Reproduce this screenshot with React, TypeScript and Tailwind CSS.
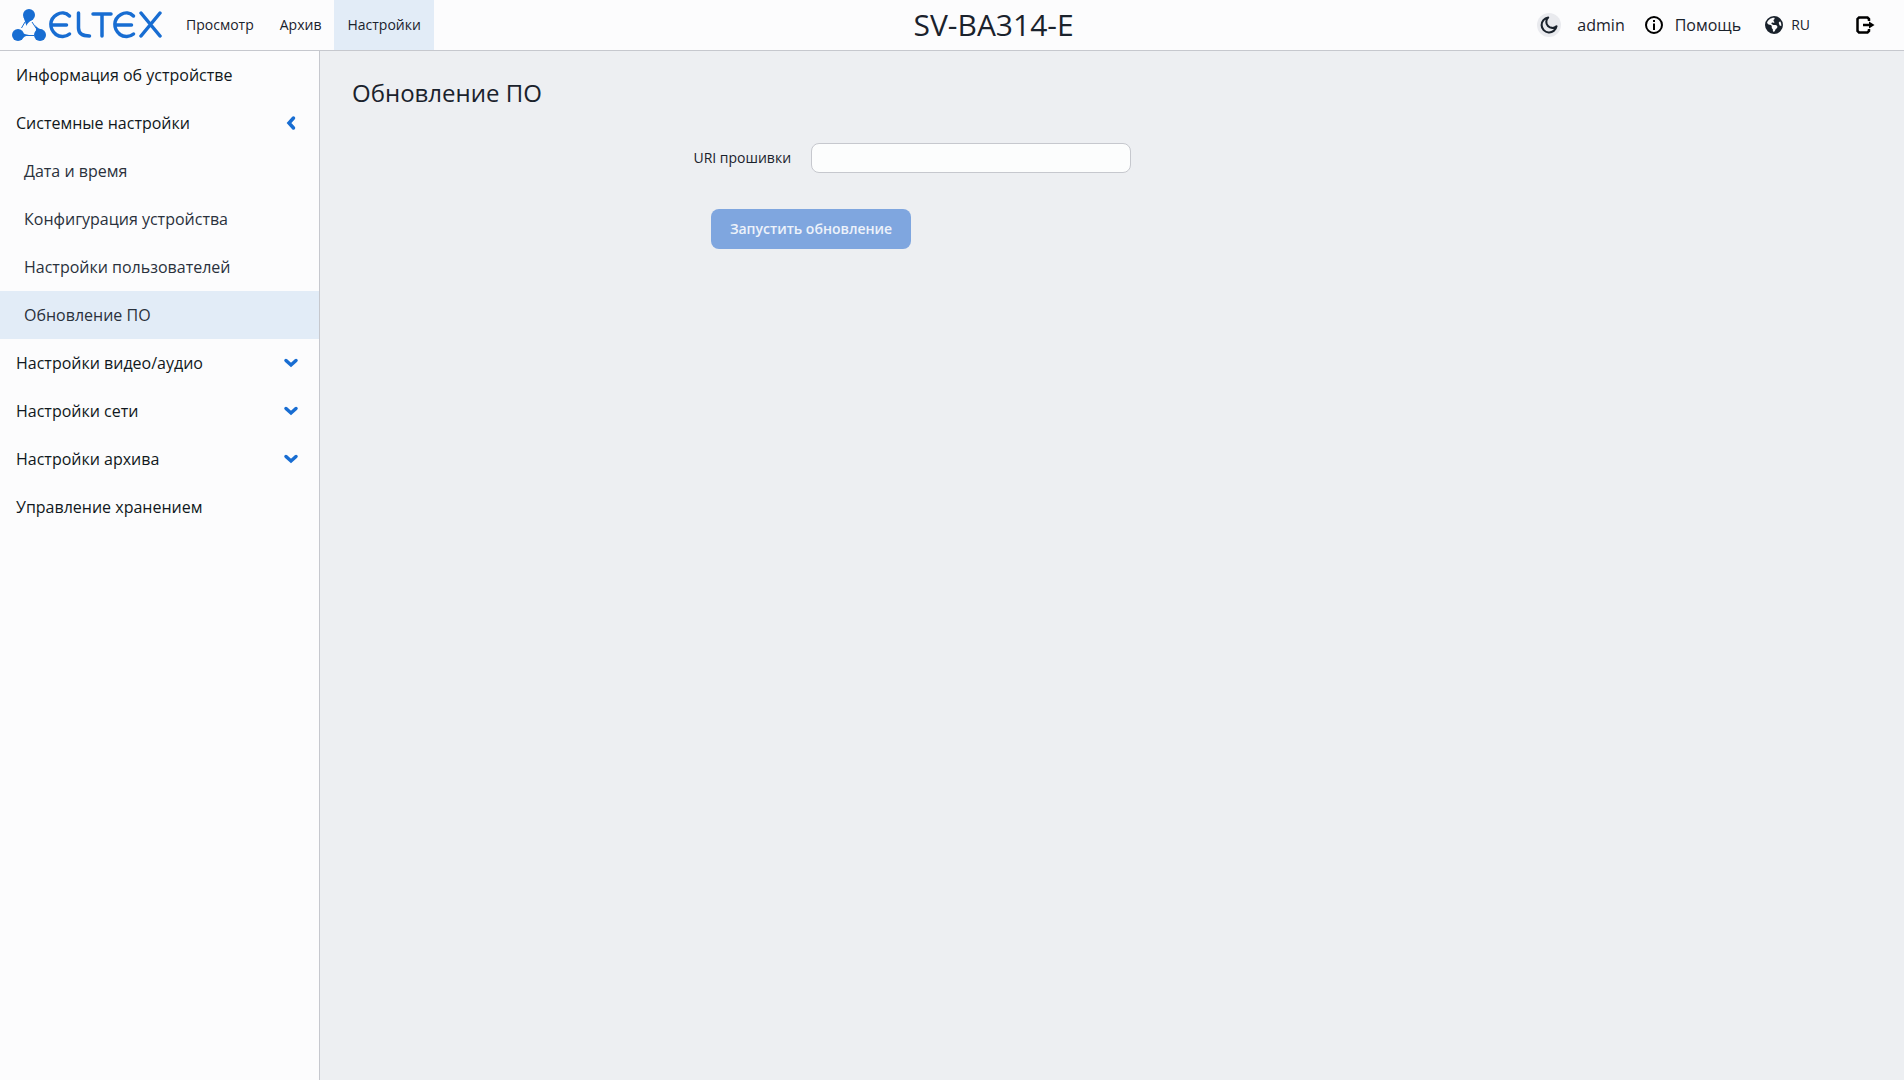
import { useState } from 'react';
import { FaEarthAmericas } from 'react-icons/fa6';

const topNav = ['Просмотр', 'Архив', 'Настройки'];

interface MenuItem {
  title: string;
  children?: string[];
}

const menu: MenuItem[] = [
  { title: 'Информация об устройстве' },
  {
    title: 'Системные настройки',
    children: ['Дата и время', 'Конфигурация устройства', 'Настройки пользователей', 'Обновление ПО']
  },
  { title: 'Настройки видео/аудио', children: [] },
  { title: 'Настройки сети', children: [] },
  { title: 'Настройки архива', children: [] },
  { title: 'Управление хранением' }
];

function Logo() {
  return (
    <svg viewBox="0 0 150 34" className="h-[34px] w-[150px]" fill="none" stroke="#186dd2" role="img" aria-label="Eltex">
      <g fill="#186dd2" stroke="none">
        <circle cx="17" cy="7" r="6" />
        <circle cx="6" cy="27" r="6" />
        <circle cx="28" cy="27" r="6" />
        <path d="M11.500 9L14.500 18Q15 15 20 12Z" />
        <path d="M6 21.500Q10 26 17 27Q12 28 9 32Z" />
        <path d="M23 25Q25 22 23 17Q26 21 31 22Z" />
      </g>
      <path d="M13 14L9.500 20M20 14L24 20M14 27.500H22" strokeWidth="1" />
      <g strokeWidth="3.500" strokeLinecap="round" strokeLinejoin="round">
        <path d="M57.500 8C54 4.500 49 4.200 45 6.500C37 11 37 21 44 26.500C48 29.500 54 29 57.500 26M39.500 17H54.500" />
        <path d="M66.500 5V20Q66.500 28 77.500 28" />
        <path d="M81 6H99M90 6V28" />
        <path d="M121.500 8C118 4.500 113 4.200 109 6.500C101 11 101 21 108 26.500C112 29.500 118 29 121.500 26M103.500 17H119.500" />
        <path d="M129 5L148 28M148 5L129 28" />
      </g>
    </svg>
  );
}

function Chevron({ open }: { open: boolean }) {
  return (
    <svg
      viewBox="0 0 16 16"
      className={`size-4 ${open ? 'rotate-90' : ''}`}
      fill="none"
      stroke="#186dd2"
      strokeWidth="3.500"
      strokeLinecap="round"
    >
      <path d="M3 5.500L8 10L13 5.500" />
    </svg>
  );
}

function Header() {
  return (
    <header className="flex h-[51px] shrink-0 items-center justify-between border-b border-[#c6c8ce] bg-[#fcfcfd]">
      <div className="mr-4 flex h-full items-center">
        <a href="#home" className="ml-3 mr-[11px]">
          <Logo />
        </a>
        <nav className="flex h-full text-sm font-medium">
          {topNav.map((item) => (
            <a
              key={item}
              href="#nav"
              className={`flex items-center px-[13px] ${item === 'Настройки' ? 'bg-[#e2ecf7]' : ''}`}
            >
              {item}
            </a>
          ))}
        </nav>
      </div>
      <div className="text-3xl">SV-BA314-E</div>
      <div className="flex items-center pr-7">
        <button type="button" aria-label="Тема" className="flex size-6 items-center justify-center rounded-full bg-[#e9eaee]">
          <svg viewBox="0 0 24 24" className="size-5" fill="none" stroke="currentColor" strokeWidth="2.500" strokeLinejoin="round">
            <path d="M21 13.500A9 9 0 1 1 11 3A7 7 0 0 0 21 13.500Z" />
          </svg>
        </button>
        <span className="ml-4">admin</span>
        <a href="#help" className="ml-5 flex items-center gap-3">
          <svg viewBox="0 0 18 18" className="size-[18px]" fill="none" stroke="#000" strokeWidth="2">
            <circle cx="9" cy="9" r="8" />
            <path d="M9 4V6M9 7.500V14" />
          </svg>
          Помощь
        </a>
        <button type="button" className="ml-6 flex items-center gap-2 text-sm">
          <FaEarthAmericas className="size-[18px]" />
          RU
        </button>
        <button type="button" aria-label="Выход" className="ml-[46px]">
          <svg viewBox="0 0 20 18" className="h-[18px] w-5" fill="none" stroke="#000" strokeWidth="2.500">
            <path d="M13 5V3L11.500 1.500H3L1.500 3V15L3 16.500H11.500L13 15V13" />
            <path d="M7 9H15" />
            <path d="M13 5.500L18.500 9L13 12.500Z" fill="#000" stroke="none" />
          </svg>
        </button>
      </div>
    </header>
  );
}

function Sidebar() {
  const [active, setActive] = useState('Обновление ПО');

  return (
    <aside className="w-80 shrink-0 border-r border-[#c6c8ce] bg-[#fcfcfd]">
      {menu.map((item) => (
        <div key={item.title}>
          <button type="button" className="flex h-12 w-full items-center justify-between pl-4 pr-5 text-left font-medium text-[#101820]">
            {item.title}
            {item.children && <Chevron open={item.children.length > 0} />}
          </button>
          {item.children?.map((child) => (
            <button
              key={child}
              type="button"
              onClick={() => setActive(child)}
              className={`flex h-12 w-full items-center pl-6 text-left text-[#2a313c] ${child === active ? 'bg-[#e2ecf7]' : ''}`}
            >
              {child}
            </button>
          ))}
        </div>
      ))}
    </aside>
  );
}

export default function App() {
  const [uri, setUri] = useState('');

  return (
    <div className="flex min-h-screen flex-col bg-[#edeff2] font-['Open_Sans',sans-serif] text-[#1a222c]">
      <Header />
      <div className="flex flex-1">
        <Sidebar />
        <main className="flex-1 pt-[26px]">
          <h1 className="pl-8 text-2xl font-medium">Обновление ПО</h1>
          <form>
            <div className="mt-[34px] flex items-center">
              <label htmlFor="uri" className="w-[31%] pr-5 text-right text-sm font-medium">
                URI прошивки
              </label>
              <input
                id="uri"
                type="text"
                value={uri}
                onChange={(e) => setUri(e.target.value)}
                className="h-[30px] w-80 rounded-lg border border-[#c6c8ce] bg-[#fcfdfd] px-2 text-sm"
              />
            </div>
            <div className="mt-9 flex w-[62%] justify-center">
              <button
                type="submit"
                disabled={!uri}
                className="h-10 w-[200px] rounded-lg bg-[#186dd2] text-sm font-semibold text-white disabled:bg-[#7fa6df] disabled:text-[#edf2fa]"
              >
                Запустить обновление
              </button>
            </div>
          </form>
        </main>
      </div>
    </div>
  );
}
